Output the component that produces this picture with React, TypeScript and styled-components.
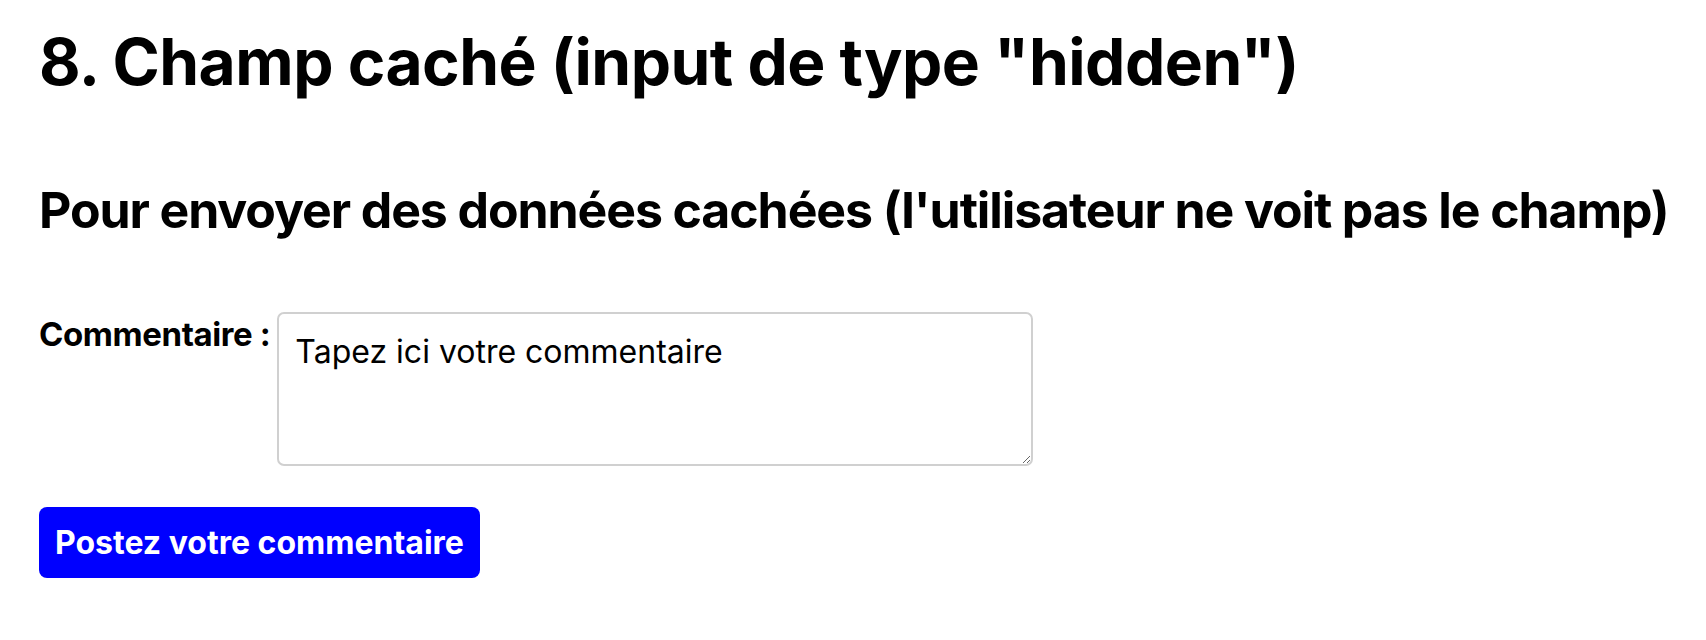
import styled, { createGlobalStyle } from "styled-components";

const GlobalStyle = createGlobalStyle`
  html, body {
    margin: 0;
    padding: 0;
    background: #ffffff;
  }
  body {
    font-family: Inter, "Noto Sans", Arial, sans-serif;
    color: #000000;
  }
`;

const Page = styled.main`
  padding: 24px 39px;
`;

const Title = styled.h1`
  margin: 0 0 79px;
  font-size: 64px;
  font-weight: 700;
  line-height: 1.2;
  letter-spacing: -0.5px;
`;

const Subtitle = styled.h2`
  margin: 0 0 72px;
  font-size: 50px;
  font-weight: 700;
  line-height: 1.2;
  letter-spacing: -1.1px;
  white-space: nowrap;
`;

const Form = styled.form`
  display: flex;
  flex-direction: column;
  align-items: flex-start;
  gap: 41px;
`;

const Row = styled.div`
  display: flex;
  align-items: flex-start;
  gap: 7px;
`;

const Label = styled.label`
  font-size: 33px;
  font-weight: 700;
  line-height: 1.2;
  letter-spacing: -0.4px;
  padding-top: 3px;
`;

const Area = styled.textarea`
  width: 756px;
  height: 154px;
  box-sizing: border-box;
  padding: 17px 16px;
  font-family: Inter, "Noto Sans", Arial, sans-serif;
  font-size: 32px;
  line-height: 1.3;
  color: #000;
  border: 2px solid #d0d0d0;
  border-radius: 7px;
  resize: both;
  outline: none;
`;

const SubmitButton = styled.button`
  padding: 0 16px;
  height: 71px;
  border: none;
  border-radius: 8px;
  background: #0000ff;
  color: #ffffff;
  font-family: Inter, "Noto Sans", Arial, sans-serif;
  font-size: 32px;
  font-weight: 700;
  cursor: pointer;
`;

const App = () => {
  return (
    <>
      <GlobalStyle />
      <Page>
        <Title>8. Champ caché (input de type "hidden")</Title>
        <Subtitle>
          Pour envoyer des données cachées (l'utilisateur ne voit pas le champ)
        </Subtitle>
        <Form onSubmit={(e) => e.preventDefault()}>
          <input type="hidden" name="source" value="formulaire" />
          <Row>
            <Label htmlFor="commentaire">Commentaire :</Label>
            <Area id="commentaire" defaultValue="Tapez ici votre commentaire" />
          </Row>
          <SubmitButton type="submit">Postez votre commentaire</SubmitButton>
        </Form>
      </Page>
    </>
  );
};

export default App;
